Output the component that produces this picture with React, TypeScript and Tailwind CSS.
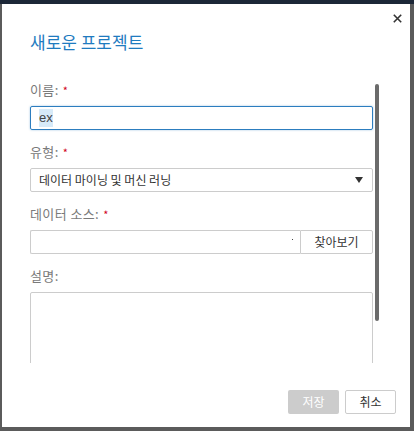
import React from 'react';

const font = { fontFamily: '"Noto Sans CJK KR", "Noto Sans", sans-serif' };

function Label({ text, required }: { text: string; required?: boolean }) {
  return (
    <div className="flex h-[16px] items-center text-[13px] leading-[16px] text-[#7a7a7a]">
      <span className="tracking-[0.4px]">{text}</span>
      {required && <span className="ml-[4px] text-[11px] text-[#d0021b]">*</span>}
    </div>
  );
}

export default function App() {
  return (
    <div className="flex h-[431px] w-[414px] flex-col overflow-hidden bg-[#5b5b5b]" style={font}>
      <div className="h-[4px] bg-[#1c2737]" />
      <div className="flex px-[2px]">
        <div className="relative flex h-[423px] w-[408px] flex-col bg-white">
          <button className="absolute right-[8px] top-[9px] flex h-[10px] w-[10px] items-center justify-center">
            <svg width="9" height="9" viewBox="0 0 9 9">
              <path d="M0.8 0.8 L8.2 8.2 M8.2 0.8 L0.8 8.2" stroke="#333" strokeWidth="1.6" />
            </svg>
          </button>

          <div className="h-[70px] px-[28px] pt-[26px]">
            <h2 className="text-[17px] font-normal leading-[24px] text-[#1f7bbf]">새로운 프로젝트</h2>
          </div>

          <div className="relative h-[289px] overflow-hidden">
            <div className="absolute left-[373px] top-[10px] h-[237px] w-[4px] rounded-[2px] bg-[#6b6b6b]" />
            <div className="flex w-[371px] flex-col pl-[28px] pt-[8px]">
              <Label text="이름:" required />
              <div className="mb-[14px] mt-[8px] flex h-[24px] items-center rounded-[2px] border border-[#2c7dbf] px-[8px] text-[13px] text-[#444] shadow-[0_0_2px_rgba(44,125,191,0.5)]">
                <span className="bg-[#d7eaf8] leading-[18px]" style={{ fontFamily: '"Liberation Sans", Arial, sans-serif' }}>ex</span>
              </div>

              <Label text="유형:" required />
              <div className="mb-[14px] mt-[8px] flex h-[24px] items-center justify-between rounded-[2px] border border-[#cccccc] pl-[8px] pr-[9px] text-[12px] text-[#333]">
                <span>데이터 마이닝 및 머신 러닝</span>
                <svg width="8" height="6" viewBox="0 0 8 6">
                  <path d="M0 0 L8 0 L4 6 Z" fill="#333" />
                </svg>
              </div>

              <Label text="데이터 소스:" required />
              <div className="mb-[14px] mt-[8px] flex h-[24px]">
                <div className="relative flex-1 rounded-l-[2px] border border-r-0 border-[#cccccc]">
                  <span className="absolute right-[7px] top-[8px] h-[1px] w-[1px] bg-[#444]" />
                </div>
                <button className="h-[24px] w-[73px] rounded-r-[2px] border border-[#cccccc] bg-white text-[12px] text-[#333]">
                  찾아보기
                </button>
              </div>

              <Label text="설명:" />
              <div className="mt-[8px] h-[120px] rounded-[2px] border border-[#cccccc]" />
            </div>
          </div>

          <div className="flex justify-end gap-[6px] pr-[14px] pt-[27px]">
            <button className="h-[24px] w-[51px] rounded-[2px] bg-[#cccccc] text-[12px] text-white">저장</button>
            <button className="h-[24px] w-[51px] rounded-[2px] border border-[#cccccc] bg-white text-[12px] text-[#333]">취소</button>
          </div>
        </div>
      </div>
    </div>
  );
}
